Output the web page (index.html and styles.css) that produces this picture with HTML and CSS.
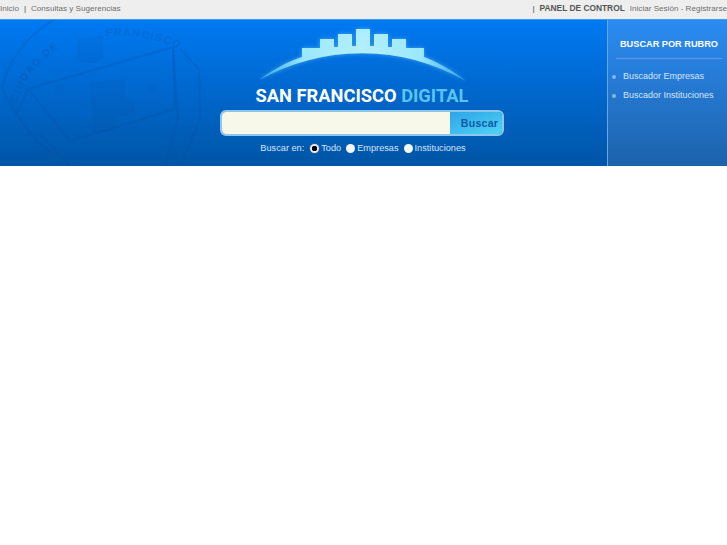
FILE: index.html
```html
<!DOCTYPE html>
<html lang="es">
<head>
  <meta charset="UTF-8" />
  <title>San Francisco Digital</title>
  <link rel="stylesheet" href="styles.css">
</head>
<body>
  <!-- Top bar -->
  <div class="topbar">
    <div class="topbar-left">
      <a href="#">Inicio</a><span class="sep">|</span><a href="#">Consultas y Sugerencias</a>
    </div>
    <div class="topbar-right">
      <span class="sep">|</span><a href="#" class="panel-link">PANEL DE CONTROL</a><a href="#">Iniciar Sesión</a> - <a href="#">Registrarse</a>
    </div>
  </div>
  <!-- Banner -->
  <div class="banner">
    <svg class="crest" viewBox="0 0 210 147" aria-hidden="true">
      <defs>
        <path id="crest-left" d="M17 84 C24 56 46 33 78 17" />
        <path id="crest-right" d="M106 17 C135 15 165 21 190 35" />
      </defs>
      <!-- outer shield -->
      <path class="crest-line" d="M2 70 C8 42 25 18 55 0 M180 30 L199 50 L200 100 L180 147 M2 70 C15 95 30 115 42 127 L70 147" />
      <!-- ribbon -->
      <path class="crest-line" d="M28 70 L173 28 L175 90 L70 122 Z" />
      <path class="crest-line" d="M16 97 L28 70 M173 28 L178 100 L165 147 M40 115 L70 147" />
      <!-- tower -->
      <path class="crest-fill" d="M90 63 L125 60 L125 80 L135 83 L135 95 L116 98 L116 112 L94 114 L93 100 Z" />
      <path class="crest-fill" d="M77 20 L103 17 L103 38 L98 44 L82 44 L77 38 Z" />
      <circle class="crest-fill" cx="59" cy="70" r="4" />
      <circle class="crest-fill" cx="153" cy="69" r="4" />
      <text class="crest-text"><textPath href="#crest-left">CIUDAD DE</textPath></text>
      <text class="crest-text"><textPath href="#crest-right">FRANCISCO</textPath></text>
    </svg>
    <div class="hero">
      <svg class="logo-mark" viewBox="0 0 214 57" aria-hidden="true">
        <defs>
          <radialGradient id="sky" gradientUnits="userSpaceOnUse" cx="107" cy="20" r="108">
            <stop offset="0" stop-color="#b4effd" />
            <stop offset="0.55" stop-color="#9ae8fb" />
            <stop offset="1" stop-color="#2ca4ec" />
          </radialGradient>
        </defs>
        <path fill="url(#sky)" d="M4 51 C17 41 32 33 47 28 L47 19 L65 19 L65 10 L79 10 L79 18 L83 18 L83 5 L97 5 L97 17 L101 17 L101 0 L115 0 L115 17 L119 17 L119 5 L133 5 L133 18 L137 18 L137 10 L151 10 L151 19 L169 19 L169 28 C183 33 198 42 211 52 C178 34 145 24.3 107 24.3 C69 24.3 36 34 4 51 Z" />
      </svg>
      <div class="logo-text">SAN FRANCISCO <span class="logo-accent">DIGITAL</span></div>
      <form class="search-box">
        <input type="text" class="search-input" />
        <button type="button" class="search-btn">Buscar</button>
      </form>
      <div class="search-scope">
        <span class="scope-label">Buscar en:</span>
        <label><input type="radio" name="scope" checked />Todo</label>
        <label><input type="radio" name="scope" />Empresas</label>
        <label><input type="radio" name="scope" />Instituciones</label>
      </div>
    </div>
    <div class="sidebar">
      <h3>BUSCAR POR RUBRO</h3>
      <ul>
        <li><a href="#">Buscador Empresas</a></li>
        <li><a href="#">Buscador Instituciones</a></li>
      </ul>
    </div>
  </div>
</body>
</html>
```
FILE: styles.css
```css
/* Global Styles */
body {
  margin: 0;
  font-family: "Liberation Sans", Arial, sans-serif;
  background-color: #fff;
  color: #666;
}
a {
  color: inherit;
  text-decoration: none;
}
/* Top bar */
.topbar {
  height: 19px;
  padding-bottom: 3px;
  box-sizing: border-box;
  background-color: #eeeeee;
  display: flex;
  justify-content: space-between;
  align-items: center;
  font-size: 8.1px;
  color: #6e6e6e;
  white-space: nowrap;
}
.topbar .sep {
  margin: 0 5px;
  color: #444;
}
.panel-link {
  font-weight: bold;
  font-size: 8.4px;
  color: #555;
  margin-right: 5px;
}
/* Banner */
.banner {
  position: relative;
  box-sizing: border-box;
  height: 147px;
  display: flex;
  overflow: hidden;
  border-top: 1px solid #3f9bec;
  background: linear-gradient(#0079f2, #0055a6);
}
.crest {
  position: absolute;
  left: 0;
  top: -1px;
  width: 210px;
  height: 147px;
}
.crest-line {
  fill: none;
  stroke: #0a4f9e;
  stroke-opacity: 0.22;
  stroke-width: 2;
}
.crest-fill {
  fill: #0a4f9e;
  fill-opacity: 0.1;
}
.crest-text {
  font-size: 10.5px;
  font-weight: bold;
  letter-spacing: 1.5px;
  fill: #0a4f9e;
  fill-opacity: 0.3;
}
.hero {
  position: relative;
  flex: 1;
  display: flex;
  flex-direction: column;
  align-items: center;
  padding-top: 9px;
  padding-left: 117px;
}
.logo-mark {
  display: block;
  width: 214px;
  height: 57px;
  filter: drop-shadow(0 0 2px rgba(130, 220, 255, 0.5));
}
.logo-text {
  margin-top: -1px;
  font-family: Roboto, "Liberation Sans", sans-serif;
  font-size: 18.3px;
  line-height: 22px;
  font-weight: bold;
  color: #fff;
  white-space: nowrap;
}
.logo-accent {
  color: #5cc3f1;
}
/* Search box */
.search-box {
  width: 284px;
  height: 26px;
  margin: 3px 0 0;
  box-sizing: border-box;
  display: flex;
  border: 2px solid #8fc6ee;
  border-radius: 6px;
  overflow: hidden;
}
.search-input {
  flex: 1;
  min-width: 0;
  border: none;
  padding: 0;
  background-color: #f7f8ea;
}
.search-btn {
  width: 52px;
  border: none;
  padding: 0 0 0 7px;
  background: linear-gradient(160deg, #2ea4e8, #4fd4f5);
  color: #0b5aa8;
  font-family: "Liberation Sans", Arial, sans-serif;
  font-size: 10.5px;
  font-weight: bold;
  letter-spacing: 0.3px;
}
.search-scope {
  display: flex;
  align-items: center;
  margin-top: 7px;
  padding-left: 2px;
  font-size: 9.2px;
  color: #d4e6f8;
}
.scope-label {
  margin-right: 6px;
}
.search-scope label {
  display: flex;
  align-items: center;
  margin-right: 5px;
}
.search-scope label:last-child {
  margin-right: 0;
}
.search-scope input {
  appearance: none;
  width: 9px;
  height: 9px;
  margin: 0 2px 0 0;
  border-radius: 50%;
  background-color: #f4f6f8;
}
.search-scope input:checked {
  background: radial-gradient(circle, #000 2.5px, #eee 3px);
  box-shadow: 0 0 0 1px #2a5f94;
}
/* Sidebar */
.sidebar {
  position: relative;
  box-sizing: border-box;
  width: 120px;
  padding: 0 7px 0 8px;
  border-left: 1px solid #6ba6e4;
  background: linear-gradient(#2b8cf2, #1d62ab);
  color: #d4e6f8;
}
.sidebar h3 {
  margin: 0 -2px 0 0;
  padding: 19px 0 8px;
  border-bottom: 1px solid #5f9bdc;
  text-align: center;
  font-size: 9.2px;
  line-height: 11px;
  white-space: nowrap;
  color: #fff;
}
.sidebar ul {
  list-style: none;
  margin: 0;
  padding: 8px 0 0;
  font-size: 9px;
}
.sidebar li {
  position: relative;
  height: 19px;
  line-height: 19px;
  padding-left: 7px;
  white-space: nowrap;
}
.sidebar li::before {
  content: "";
  position: absolute;
  left: -4px;
  top: 8px;
  width: 4px;
  height: 4px;
  border-radius: 50%;
  background-color: #7fb8ee;
}
```
